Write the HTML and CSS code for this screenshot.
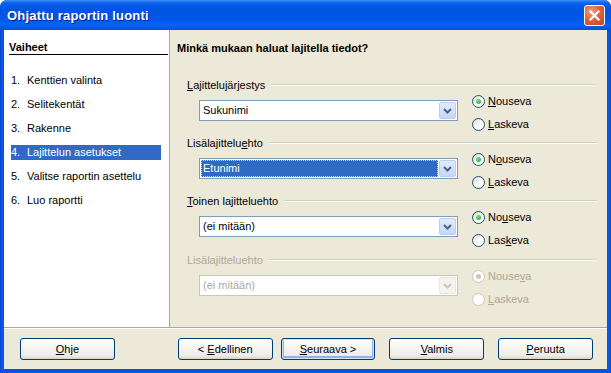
FILE: index.html
```html
<!DOCTYPE html>
<html lang="fi">
<head>
    <meta charset="UTF-8">
    <title>Ohjattu raportin luonti</title>
    <link rel="stylesheet" href="styles.css">
</head>
<body>
    <div class="window">
        <div class="titlebar">
            <span class="title">Ohjattu raportin luonti</span>
            <span class="close">
                <svg width="13" height="13" viewBox="0 0 13 13"><path d="M2.5 2.5 L10.5 10.5 M10.5 2.5 L2.5 10.5" stroke="#fff" stroke-width="2.2" stroke-linecap="square"/></svg>
            </span>
        </div>

        <div class="client">
            <div class="main">
                <div class="steps">
                    <div class="steps-head">Vaiheet</div>
                    <ol class="step-list">
                        <li><span class="num">1.</span>Kenttien valinta</li>
                        <li><span class="num">2.</span>Selitekentät</li>
                        <li><span class="num">3.</span>Rakenne</li>
                        <li class="active"><span class="num">4.</span>Lajittelun asetukset</li>
                        <li><span class="num">5.</span>Valitse raportin asettelu</li>
                        <li><span class="num">6.</span>Luo raportti</li>
                    </ol>
                </div>

                <div class="page">
                    <h1>Minkä mukaan haluat lajitella tiedot?</h1>

                    <div class="group">
                        <div class="group-label"><span><u>L</u>ajittelujärjestys</span></div>
                        <div class="group-body">
                            <div class="combo">
                                <span class="combo-text">Sukunimi</span>
                                <span class="combo-btn"><svg width="9" height="6" viewBox="0 0 9 6"><path d="M1 1 L4.5 4.5 L8 1" fill="none" stroke="#4d6185" stroke-width="2"/></svg></span>
                            </div>
                            <div class="radios">
                                <div class="radio"><span class="dot checked"></span><span><u>N</u>ouseva</span></div>
                                <div class="radio"><span class="dot"></span><span><u>L</u>askeva</span></div>
                            </div>
                        </div>
                    </div>

                    <div class="group">
                        <div class="group-label"><span>Lisälajittelu<u>e</u>hto</span></div>
                        <div class="group-body">
                            <div class="combo">
                                <span class="combo-text selected">Etunimi</span>
                                <span class="combo-btn"><svg width="9" height="6" viewBox="0 0 9 6"><path d="M1 1 L4.5 4.5 L8 1" fill="none" stroke="#4d6185" stroke-width="2"/></svg></span>
                            </div>
                            <div class="radios">
                                <div class="radio"><span class="dot checked"></span><span>N<u>o</u>useva</span></div>
                                <div class="radio"><span class="dot"></span><span><u>L</u>askeva</span></div>
                            </div>
                        </div>
                    </div>

                    <div class="group">
                        <div class="group-label"><span><u>T</u>oinen lajitteluehto</span></div>
                        <div class="group-body">
                            <div class="combo">
                                <span class="combo-text">(ei mitään)</span>
                                <span class="combo-btn"><svg width="9" height="6" viewBox="0 0 9 6"><path d="M1 1 L4.5 4.5 L8 1" fill="none" stroke="#4d6185" stroke-width="2"/></svg></span>
                            </div>
                            <div class="radios">
                                <div class="radio"><span class="dot checked"></span><span>No<u>u</u>seva</span></div>
                                <div class="radio"><span class="dot"></span><span>Las<u>k</u>eva</span></div>
                            </div>
                        </div>
                    </div>

                    <div class="group disabled">
                        <div class="group-label"><span>Lisälajitteluehto</span></div>
                        <div class="group-body">
                            <div class="combo">
                                <span class="combo-text">(ei mitään)</span>
                                <span class="combo-btn"><svg width="9" height="6" viewBox="0 0 9 6"><path d="M1 1 L4.5 4.5 L8 1" fill="none" stroke="#c9c7ba" stroke-width="2"/></svg></span>
                            </div>
                            <div class="radios">
                                <div class="radio"><span class="dot checked"></span><span>Nouse<u>v</u>a</span></div>
                                <div class="radio"><span class="dot"></span><span><u>L</u>askeva</span></div>
                            </div>
                        </div>
                    </div>
                </div>
            </div>

            <div class="buttons">
                <button class="btn help"><u>O</u>hje</button>
                <button class="btn prev">&lt; <u>E</u>dellinen</button>
                <button class="btn next default"><u>S</u>euraava &gt;</button>
                <button class="btn finish"><u>V</u>almis</button>
                <button class="btn"><u>P</u>eruuta</button>
            </div>
        </div>
    </div>
</body>
</html>
```

FILE: styles.css
```css
* {
    margin: 0;
    padding: 0;
    box-sizing: border-box;
}

body {
    width: 611px;
    height: 373px;
    overflow: hidden;
    background: #fff;
    font-family: "Liberation Sans", Arial, sans-serif;
    font-size: 11px;
    color: #000;
}

u {
    text-decoration: underline;
    text-underline-offset: 1px;
}

/* window frame */

.window {
    width: 611px;
    height: 373px;
    display: flex;
    flex-direction: column;
    padding: 0 4px 4px;
    border-radius: 7px 7px 0 0;
    background: linear-gradient(to right, #0a3fcf 0, #0b5be6 2px, #0055e5 4px, #0055e5 607px, #0b5be6 609px, #0a3fcf 611px);
}

.titlebar {
    height: 30px;
    margin: 0 -4px;
    padding: 1px 6px 0 7px;
    display: flex;
    align-items: center;
    justify-content: space-between;
    border-radius: 7px 7px 0 0;
    background: linear-gradient(#3d8ff6 0, #0b61ea 3px, #0054e3 9px, #0056e8 18px, #0463f5 25px, #0050dc 30px);
}

.title {
    color: #fff;
    font-weight: bold;
    font-size: 13px;
    letter-spacing: 0.2px;
    text-shadow: 1px 1px 0 #0a1e8c;
}

.close {
    width: 21px;
    height: 21px;
    margin-top: -1px;
    border: 1px solid #fff;
    border-radius: 3px;
    display: flex;
    align-items: center;
    justify-content: center;
    background: radial-gradient(circle at 35% 30%, #f0a286 0, #e2633f 45%, #c5411b 100%);
}

.client {
    flex: 1;
    display: flex;
    flex-direction: column;
    background: #ece9d8;
}

.main {
    height: 298px;
    display: flex;
    border-bottom: 1px solid #aca899;
    box-shadow: 0 1px 0 #fff;
}

/* steps panel */

.steps {
    width: 166px;
    background: #fff;
    border-right: 1px solid #aca899;
}

.steps-head {
    margin: 0 1px 0 5px;
    padding-top: 11px;
    line-height: 13px;
    font-weight: bold;
    border-bottom: 1px solid #000;
}

.step-list {
    list-style: none;
    margin-top: 18px;
}

.step-list li {
    display: flex;
    width: 150px;
    height: 15px;
    line-height: 15px;
    margin: 0 0 9px 7px;
}

.step-list li.active {
    background: #316ac5;
    color: #fff;
}

.num {
    width: 16px;
}

/* sort page */

.page {
    flex: 1;
    padding: 12px 10px 0 0;
}

.page h1 {
    font-size: 11px;
    font-weight: bold;
    line-height: 13px;
    padding-left: 7px;
    margin-bottom: 23px;
}

.group {
    margin: 0 0 4px 17px;
}

.group.disabled {
    margin-top: 5px;
}

.group-label {
    display: flex;
    align-items: center;
    height: 14px;
    line-height: 14px;
}

.group-label::after {
    content: '';
    flex: 1;
    margin-left: 6px;
    border-top: 1px solid #d0d0bf;
    border-bottom: 1px solid #fff;
}

.group-body {
    display: flex;
    align-items: flex-start;
    margin-top: 8px;
    padding-left: 12px;
}

.combo {
    width: 259px;
    height: 21px;
    padding: 1px;
    display: flex;
    border: 1px solid #7f9db9;
    background: #fff;
}

.combo-text {
    flex: 1;
    height: 17px;
    line-height: 17px;
    padding-left: 2px;
    margin-right: 1px;
}

.combo-text.selected {
    background: #316ac5;
    color: #fff;
    outline: 1px dotted #e8d898;
    outline-offset: -1px;
}

.combo-btn {
    width: 17px;
    height: 17px;
    display: flex;
    align-items: center;
    justify-content: center;
    border: 1px solid #bccdf5;
    border-radius: 2px;
    background: linear-gradient(#e3ebfd, #c6d5fc);
}

.radios {
    display: flex;
    flex-direction: column;
    gap: 7px;
    margin: -7px 0 0 14px;
}

.radio {
    display: flex;
    align-items: center;
    gap: 3px;
    height: 16px;
}

.dot {
    width: 13px;
    height: 13px;
    border-radius: 50%;
    border: 1px solid #1c5180;
    background: linear-gradient(135deg, #dcd9cd 0, #fff 60%);
    display: flex;
    align-items: center;
    justify-content: center;
}

.dot.checked::after {
    content: '';
    width: 5px;
    height: 5px;
    border-radius: 50%;
    background: radial-gradient(circle at 35% 35%, #7de07d, #21a121);
}

.disabled {
    color: #aca899;
}

.disabled .combo {
    border-color: #c9c7ba;
}

.disabled .combo-btn {
    border-color: #e8e6dc;
    background: #f4f3ee;
}

.disabled .dot {
    border-color: #cac8bb;
    background: #fff;
}

.disabled .dot.checked::after {
    background: #cac8bb;
}

/* bottom buttons */

.buttons {
    display: flex;
    padding: 10px 0 0 16px;
}

.btn {
    width: 95px;
    height: 22px;
    font-family: "Liberation Sans", Arial, sans-serif;
    font-size: 11px;
    color: #000;
    border: 1px solid #003c74;
    border-radius: 3px;
    background: linear-gradient(#fff 0, #f5f4ef 45%, #ecebe6 85%, #d8d2c7 100%);
    margin-right: 14px;
}

.btn.help {
    margin-right: 63px;
}

.btn.prev {
    margin-right: 8px;
}

.btn.default {
    box-shadow: inset 0 0 0 1px #cee7ff, inset 0 -1px 0 2px #8fb2ee;
}
```
